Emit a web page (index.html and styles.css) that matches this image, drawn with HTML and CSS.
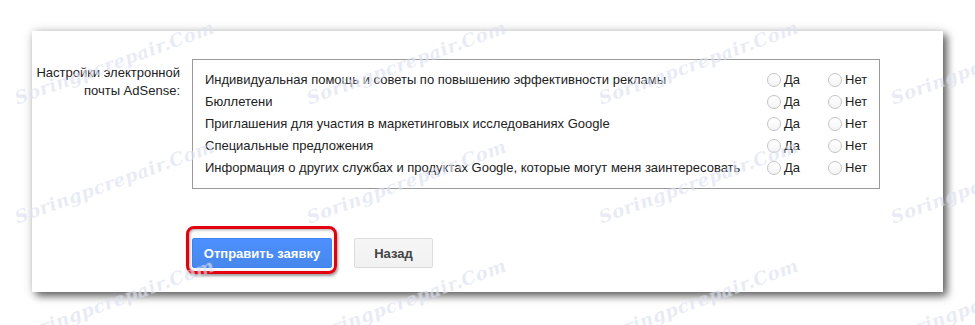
FILE: index.html
```html
<!DOCTYPE html>
<html lang="ru">
<head>
    <meta charset="UTF-8">
    <meta name="viewport" content="width=device-width, initial-scale=1.0">
    <title>Настройки AdSense</title>
    <link rel="stylesheet" href="styles.css">
</head>
<body>
    <div class="panel">
        <div class="form-row">
            <div class="field-label">Настройки электронной почты AdSense:</div>
            <div class="options">
                <div class="option-row">
                    <span class="question">Индивидуальная помощь и советы по повышению эффективности рекламы</span>
                    <label class="choice choice-yes"><input type="radio" name="q1"> Да</label>
                    <label class="choice choice-no"><input type="radio" name="q1"> Нет</label>
                </div>
                <div class="option-row">
                    <span class="question">Бюллетени</span>
                    <label class="choice choice-yes"><input type="radio" name="q2"> Да</label>
                    <label class="choice choice-no"><input type="radio" name="q2"> Нет</label>
                </div>
                <div class="option-row">
                    <span class="question">Приглашения для участия в маркетинговых исследованиях Google</span>
                    <label class="choice choice-yes"><input type="radio" name="q3"> Да</label>
                    <label class="choice choice-no"><input type="radio" name="q3"> Нет</label>
                </div>
                <div class="option-row">
                    <span class="question">Специальные предложения</span>
                    <label class="choice choice-yes"><input type="radio" name="q4"> Да</label>
                    <label class="choice choice-no"><input type="radio" name="q4"> Нет</label>
                </div>
                <div class="option-row">
                    <span class="question">Информация о других службах и продуктах Google, которые могут меня заинтересовать</span>
                    <label class="choice choice-yes"><input type="radio" name="q5"> Да</label>
                    <label class="choice choice-no"><input type="radio" name="q5"> Нет</label>
                </div>
            </div>
        </div>

        <div class="button-row">
            <span class="highlight"><button type="submit" class="btn btn-primary">Отправить заявку</button></span>
            <button type="button" class="btn btn-back">Назад</button>
        </div>
    </div>

    <!-- водяные знаки -->
    <div class="watermarks">
        <div class="watermark-grid">
            <span>Soringpcrepair.Com</span><span>Soringpcrepair.Com</span><span>Soringpcrepair.Com</span><span>Soringpcrepair.Com</span>
            <span>Soringpcrepair.Com</span><span>Soringpcrepair.Com</span><span>Soringpcrepair.Com</span><span>Soringpcrepair.Com</span>
            <span>Soringpcrepair.Com</span><span>Soringpcrepair.Com</span><span>Soringpcrepair.Com</span><span>Soringpcrepair.Com</span>
        </div>
    </div>
</body>
</html>
```

FILE: styles.css
```css
body {
    font-family: 'Liberation Sans', Arial, sans-serif;
    font-size: 13px;
    color: #222;
    margin: 0;
    background: #fff;
    position: relative;
    width: 975px;
    height: 325px;
    overflow: hidden;
}
.panel {
    box-sizing: border-box;
    margin: 31px 0 0 32px;
    width: 911px;
    height: 261px;
    padding-top: 28px;
    background: #fff;
    box-shadow: 4px 4px 8px rgba(0, 0, 0, 0.6), 0 0 10px rgba(0, 0, 0, 0.14);
}
.form-row {
    display: flex;
    align-items: flex-start;
}
.field-label {
    width: 148px;
    margin-right: 12px;
    padding-top: 5px;
    line-height: 18px;
    text-align: right;
}
.options {
    box-sizing: border-box;
    width: 688px;
    border: 1px solid #999;
    padding: 9px 7px 9px 12px;
}
.option-row {
    display: flex;
    align-items: center;
    line-height: 22px;
}
.question {
    flex: 1;
}
.choice {
    display: flex;
    align-items: center;
    gap: 3px;
}
.choice-yes {
    width: 61px;
}
.choice-no {
    width: 44px;
}
.choice input {
    appearance: none;
    -webkit-appearance: none;
    width: 14px;
    height: 14px;
    margin: 0;
    border: 1px solid #c4c4c4;
    border-radius: 50%;
    background: linear-gradient(#fff, #f4f4f4);
}
.button-row {
    display: flex;
    align-items: center;
    margin: 49px 0 0 160px;
}
.btn {
    height: 30px;
    font-family: inherit;
    font-size: 13px;
    font-weight: bold;
    border-radius: 2px;
    padding: 0;
    cursor: pointer;
}
.btn-primary {
    width: 140px;
    color: #fff;
    background: linear-gradient(#4d90fe, #4787ed);
    border: 1px solid #3d83f2;
}
.btn-back {
    width: 79px;
    margin-left: 22px;
    color: #444;
    background: linear-gradient(#f6f6f6, #f1f1f1);
    border: 1px solid #dcdcdc;
}
.highlight {
    position: relative;
    display: inline-block;
    height: 30px;
}
.highlight .btn {
    display: block;
}
.highlight::after {
    content: "";
    position: absolute;
    top: -12px;
    left: -6px;
    right: -5px;
    bottom: -6px;
    border: 3px solid #e3000f;
    border-radius: 8px;
    box-shadow: 1px 2px 3px rgba(0, 0, 0, 0.4), inset 1px 1px 3px rgba(0, 0, 0, 0.35);
    pointer-events: none;
}
.watermarks {
    position: absolute;
    top: 0;
    left: 0;
    right: 0;
    bottom: 0;
    overflow: hidden;
    pointer-events: none;
}
.watermark-grid {
    display: grid;
    grid-template-columns: repeat(4, 292px);
    grid-template-rows: repeat(3, 119px);
    place-items: center;
    margin: 3px 0 0 -31px;
}
.watermarks span {
    font-family: 'DejaVu Serif', serif;
    font-style: italic;
    font-weight: bold;
    font-size: 18px;
    letter-spacing: 0.5px;
    color: rgba(150, 165, 215, 0.22);
    text-shadow: 0 0 1px rgba(255, 255, 255, 0.6);
    transform: rotate(-20deg);
    white-space: nowrap;
}
```
